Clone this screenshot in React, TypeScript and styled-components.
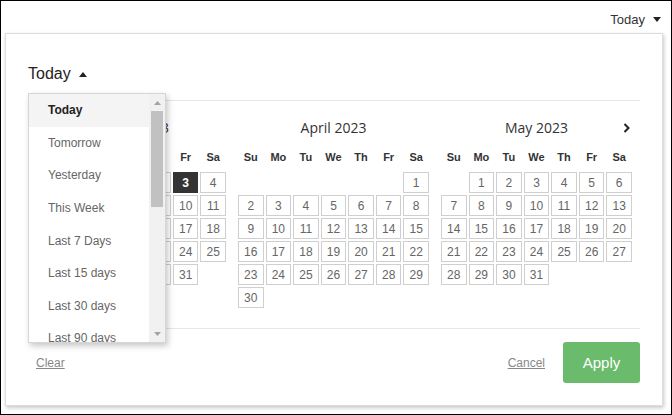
import React from "react";
import styled, { createGlobalStyle } from "styled-components";

const GlobalStyle = createGlobalStyle`
  html, body {
    margin: 0;
    padding: 0;
    background: #fff;
  }
  body {
    font-family: "Liberation Sans", Arial, sans-serif;
  }
`;

const months = [
  { name: "March 2023", start: 3, days: 31, today: 3 },
  { name: "April 2023", start: 6, days: 30, today: 0 },
  { name: "May 2023", start: 1, days: 31, today: 0 },
];

const weekDays = ["Su", "Mo", "Tu", "We", "Th", "Fr", "Sa"];

const ranges = [
  "Today",
  "Tomorrow",
  "Yesterday",
  "This Week",
  "Last 7 Days",
  "Last 15 days",
  "Last 30 days",
  "Last 90 days",
];

const Caret = ({ up }: { up?: boolean }) => (
  <svg width="8" height="5" viewBox="0 0 8 5">
    <path d={up ? "M0 5 L4 0 L8 5 Z" : "M0 0 L8 0 L4 5 Z"} fill="#222" />
  </svg>
);

const ScrollCaret = ({ up }: { up?: boolean }) => (
  <svg width="7" height="4" viewBox="0 0 7 4">
    <path d={up ? "M0 4 L3.5 0 L7 4 Z" : "M0 0 L7 0 L3.5 4 Z"} fill="#a3a3a3" />
  </svg>
);

export default function App() {
  return (
    <>
      <GlobalStyle />
      <Frame>
        <TopBar>
          <span>Today</span>
          <Caret />
        </TopBar>
        <Panel>
          <PanelHeader>
            <span>Today</span>
            <Caret up />
          </PanelHeader>

          <Dropdown>
            <OptionList>
              {ranges.map((r, i) => (
                <Option key={r} $active={i === 0}>
                  {r}
                </Option>
              ))}
            </OptionList>
            <ScrollTrack>
              <ScrollArrow>
                <ScrollCaret up />
              </ScrollArrow>
              <ScrollThumb />
              <ScrollSpace />
              <ScrollArrow>
                <ScrollCaret />
              </ScrollArrow>
            </ScrollTrack>
          </Dropdown>

          <MonthsRow>
            {months.map((m, mi) => (
              <Month key={m.name}>
                <MonthTitle>
                  {m.name}
                  {mi === months.length - 1 && (
                    <NavNext>
                      <svg width="7" height="10" viewBox="0 0 7 10">
                        <path d="M1.5 1 L5.5 5 L1.5 9" fill="none" stroke="#222" strokeWidth="2" />
                      </svg>
                    </NavNext>
                  )}
                </MonthTitle>
                <WeekRow>
                  {weekDays.map((d) => (
                    <WeekDay key={d}>{d}</WeekDay>
                  ))}
                </WeekRow>
                <DaysGrid>
                  {Array.from({ length: m.start }).map((_, i) => (
                    <Blank key={"b" + i} />
                  ))}
                  {Array.from({ length: m.days }).map((_, i) => (
                    <DayCell key={i} $active={m.today === i + 1}>
                      {i + 1}
                    </DayCell>
                  ))}
                </DaysGrid>
              </Month>
            ))}
          </MonthsRow>

          <Footer>
            <TextLink $push>Clear</TextLink>
            <TextLink>Cancel</TextLink>
            <ApplyButton>Apply</ApplyButton>
          </Footer>
        </Panel>
      </Frame>
    </>
  );
}

const Frame = styled.div`
  width: 672px;
  height: 415px;
  box-sizing: border-box;
  border: 1px solid #000;
  background: #fff;
  overflow: hidden;
`;

const TopBar = styled.div`
  height: 32px;
  box-sizing: border-box;
  padding: 4px 10px 0 0;
  display: flex;
  justify-content: flex-end;
  align-items: center;
  gap: 8px;
  font-size: 13px;
  color: #333;
`;

const Panel = styled.div`
  position: relative;
  width: 658px;
  margin-left: 4px;
  box-sizing: border-box;
  border: 1px solid #dcdcdc;
  padding: 0 22px;
  background: #fff;
  box-shadow: 1px 2px 4px rgba(0, 0, 0, 0.22);
`;

const PanelHeader = styled.div`
  display: flex;
  align-items: center;
  gap: 8px;
  padding: 28px 0 14px;
  line-height: 24px;
  font-size: 16px;
  color: #222;
  border-bottom: 1px solid #e6e6e6;
`;

const Dropdown = styled.div`
  position: absolute;
  left: 22px;
  top: 59px;
  width: 138px;
  height: 250px;
  box-sizing: border-box;
  border: 1px solid #d6d6d6;
  background: #fff;
  box-shadow: 2px 3px 6px rgba(0, 0, 0, 0.22);
  display: flex;
  z-index: 2;
`;

const OptionList = styled.div`
  flex: 1;
  overflow: hidden;
`;

const Option = styled.div<{ $active?: boolean }>`
  height: 32.6px;
  padding-left: 19px;
  display: flex;
  align-items: center;
  font-size: 12px;
  color: ${(p) => (p.$active ? "#222" : "#666")};
  font-weight: ${(p) => (p.$active ? 700 : 400)};
  background: ${(p) => (p.$active ? "#f4f4f4" : "#fff")};
  white-space: nowrap;
`;

const ScrollTrack = styled.div`
  width: 16px;
  background: #f1f1f1;
  display: flex;
  flex-direction: column;
`;

const ScrollArrow = styled.div`
  height: 17px;
  display: flex;
  align-items: center;
  justify-content: center;
`;

const ScrollThumb = styled.div`
  height: 96px;
  margin: 0 2px;
  background: #c1c1c1;
`;

const ScrollSpace = styled.div`
  flex: 1;
`;

const MonthsRow = styled.div`
  display: flex;
  align-items: flex-start;
  gap: 12px;
  padding: 0 8px 20px 7px;
`;

const Month = styled.div`
  width: 191px;
`;

const MonthTitle = styled.div`
  position: relative;
  margin-top: 17px;
  height: 20px;
  line-height: 20px;
  text-align: center;
  font-family: "Open Sans", "Liberation Sans", sans-serif;
  font-size: 14px;
  color: #333;
`;

const NavNext = styled.span`
  position: absolute;
  right: 2px;
  top: 5px;
  display: flex;
`;

const WeekRow = styled.div`
  margin-top: 11px;
  display: grid;
  grid-template-columns: repeat(7, 1fr);
  column-gap: 2px;
  line-height: 16px;
`;

const WeekDay = styled.div`
  text-align: center;
  font-size: 11px;
  font-weight: 700;
  color: #333;
`;

const DaysGrid = styled.div`
  margin-top: 7px;
  display: grid;
  grid-template-columns: repeat(7, 1fr);
  grid-auto-rows: 21px;
  gap: 2px;
`;

const Blank = styled.div``;

const DayCell = styled.div<{ $active?: boolean }>`
  box-sizing: border-box;
  border: 1px solid ${(p) => (p.$active ? "#333" : "#cfcfcf")};
  background: ${(p) => (p.$active ? "#333" : "#fff")};
  color: ${(p) => (p.$active ? "#fff" : "#666")};
  font-weight: ${(p) => (p.$active ? 700 : 400)};
  font-size: 12px;
  display: flex;
  align-items: center;
  justify-content: center;
`;

const Footer = styled.div`
  display: flex;
  align-items: center;
  padding: 13px 0 22px 8px;
  border-top: 1px solid #e6e6e6;
`;

const TextLink = styled.a<{ $push?: boolean }>`
  font-size: 12px;
  color: #888;
  text-decoration: underline;
  cursor: pointer;
  margin-right: ${(p) => (p.$push ? "auto" : "18px")};
`;

const ApplyButton = styled.button`
  width: 77px;
  height: 41px;
  border: 0;
  border-radius: 3px;
  background: #6abb6c;
  color: #fff;
  font-family: "Liberation Sans", Arial, sans-serif;
  font-size: 15px;
  cursor: pointer;
`;
